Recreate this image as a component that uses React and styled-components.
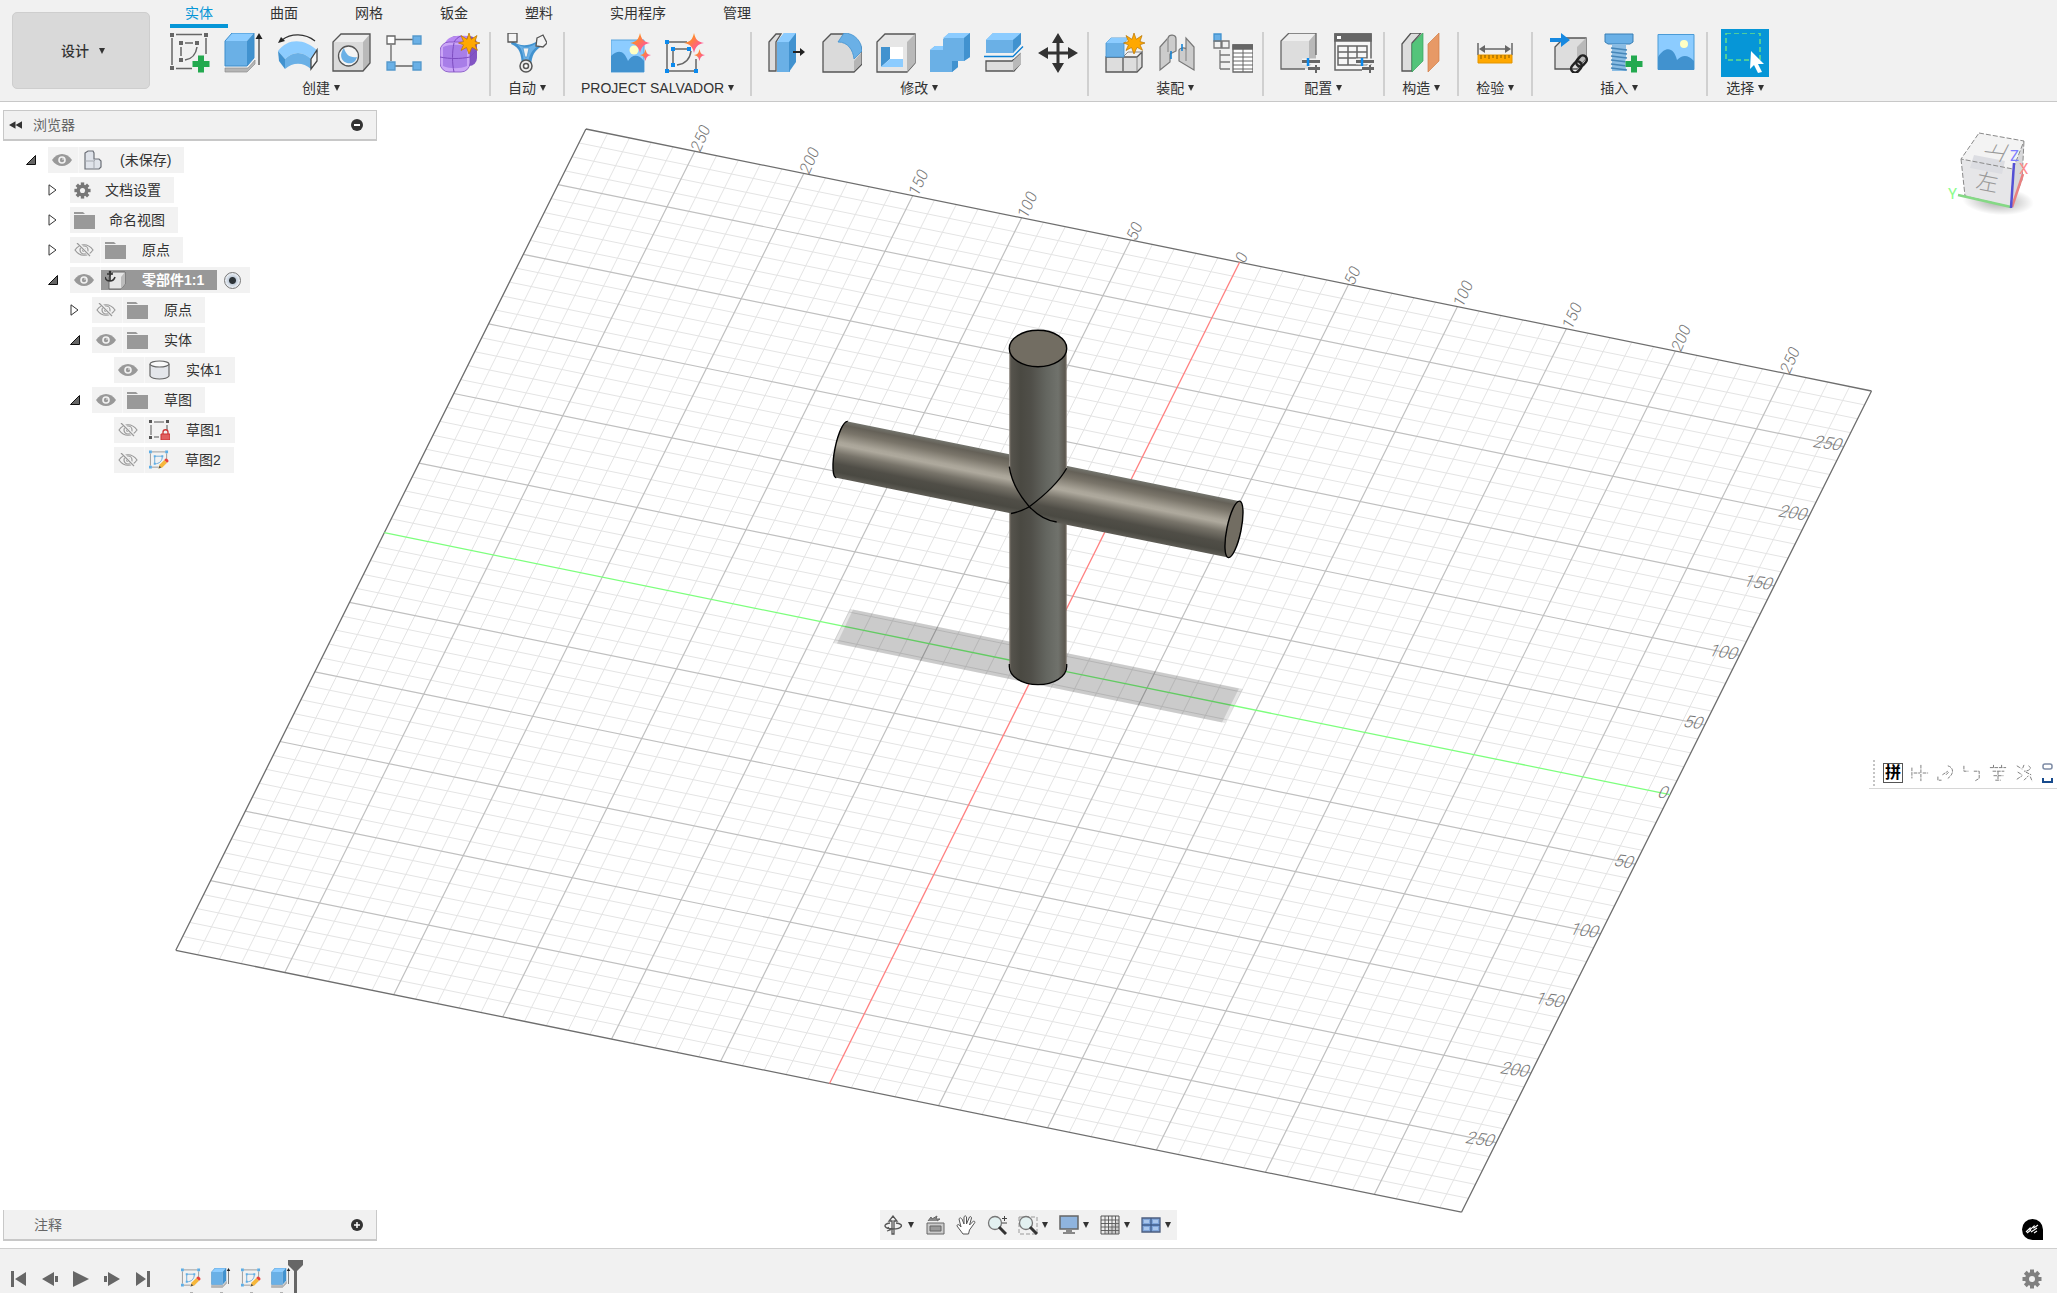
import React from 'react';
import styled, { createGlobalStyle, css } from 'styled-components';

const GlobalStyle = createGlobalStyle`
    * {
        box-sizing: border-box;
    }
    body {
        margin: 0;
        background: #ffffff;
        color: #333333;
        font-family: 'Liberation Sans', 'Noto Sans CJK SC', sans-serif;
        font-size: 14px;
        line-height: 20px;
    }
    button {
        margin: 0;
        padding: 0;
        border: 0;
        background: none;
        color: inherit;
        font: inherit;
        cursor: pointer;
    }
    ul {
        margin: 0;
        padding: 0;
        list-style: none;
    }
    svg {
        display: block;
        flex: none;
    }
`

const Page = styled.div`
    display: flex;
    flex-direction: column;
    min-height: 100vh;
    overflow: hidden;
`
const Header = styled.header`
    display: flex;
    height: 102px;
    padding-left: 12px;
    background: #f1f1f1;
    border-bottom: 1px solid #c8c8c8;
`
const Workspace = styled.button`
    display: flex;
    align-items: center;
    justify-content: center;
    gap: 10px;
    flex: none;
    width: 138px;
    height: 77px;
    margin-top: 12px;
    padding-left: 4px;
    background: #d9d9d9;
    border: 1px solid #cecece;
    border-radius: 5px;
    font-weight: 500;
`
const Caret = styled.span`
    width: 0;
    height: 0;
    border: 3px solid transparent;
    border-top: 6px solid #333333;
    border-bottom: 0;
`
const Ribbon = styled.div`
    display: flex;
    flex-direction: column;
    flex: 1;
    min-width: 0;
    gap: 4px;
    padding-left: 4px;
`
const Tabs = styled.nav`
    display: flex;
    gap: 27px;
    height: 28px;
    padding-left: 16px;
`
const Tab = styled.button`
    padding: 2px 15px 0;
    border-bottom: 4px solid ${({ $active }) => ($active ? '#0696d7' : 'transparent')};
    color: ${({ $active }) => ($active ? '#0696d7' : '#333333')};
`
const Groups = styled.div`
    display: flex;
`
const Group = styled.section`
    display: flex;
    flex-direction: column;
    align-items: center;
    gap: 5px;
    height: 64px;
    padding: 1px 9px 0 16px;
    border-right: 2px solid #d0d0d0;
    ${({ $kind }) => $kind === 'single' && css`
        padding: 1px 16px 0;
    `}
    ${({ $kind }) => $kind === 'wide' && css`
        padding: 1px 16px 0;
    `}
    ${({ $kind }) => $kind === 'last' && css`
        padding: 1px 13px 0;
        border-right: 0;
    `}
`
const Tools = styled.div`
    display: flex;
    align-items: center;
    gap: 14px;
    height: 40px;
`
const Tool = styled.button`
    ${({ $active }) => $active && css`
        padding: 4px;
        background: #0696d7;
    `}
`
const GroupLabel = styled.button`
    display: flex;
    align-items: center;
    gap: 4px;
    height: 20px;
    padding-right: ${({ $kind }) => ($kind === 'multi' ? '8px' : '0')};
    white-space: nowrap;
`

const Viewport = styled.main`
    position: relative;
    display: grid;
    flex: 1;
    grid-template-columns: 1fr auto 1fr;
    grid-template-rows: 1fr auto;
    padding: 8px 3px 7px;
`
const Scene = styled.svg`
    position: absolute;
    inset: 0;
    width: 100%;
    height: 100%;
`
const Panel = styled.aside`
    position: relative;
    width: 374px;
`
const PanelBar = styled.div`
    display: flex;
    align-items: center;
    height: 31px;
    padding: 0 13px 0 ${({ $footer }) => ($footer ? '30px' : '5px')};
    background: #f1f1f1;
    border: 1px solid #c8c8c8;
    border-bottom-width: 2px;
    ${({ $footer }) => $footer && css`
        border-top: 0;
    `}
    color: #666666;
`
const PanelTitle = styled.span`
    flex: 1;
    padding-left: ${({ $indent }) => ($indent ? '11px' : '0')};
`
const Tree = styled.ul`
    display: flex;
    flex-direction: column;
    gap: 4px;
    padding-top: 6px;
`
const TreeRow = styled.li`
    display: flex;
    align-items: center;
    height: 26px;
    padding-left: ${({ $level }) => 22 + $level * 22}px;
`
const Toggle = styled.button`
    width: 23px;
    height: 20px;
    padding-left: 1px;
`
const Blank = styled.span`
    width: 23px;
`
const Chip = styled.div`
    display: flex;
    align-items: center;
    height: 26px;
    background: #f2f2f2;
`
const EyeCell = styled.button`
    width: 31px;
    height: 26px;
    padding-left: 4px;
    border-right: 1px solid #f8f8f8;
`
const Item = styled.div`
    display: flex;
    align-items: center;
    height: 20px;
    padding-left: 4px;
    ${({ $selected }) => $selected && css`
        background: #989898;
        color: #ffffff;
        font-weight: 700;
    `}
`
const ItemText = styled.span`
    padding: 0 13px 0 ${({ $near }) => ($near ? '14px' : '16px')};
    white-space: nowrap;
`
const Radio = styled.input`
    appearance: none;
    width: 17px;
    height: 17px;
    margin: 0 9px 0 7px;
    border: 1px solid #777777;
    border-radius: 50%;
    background: radial-gradient(circle, #2c3338 0 3px, #c3cedb 4px, #e8edf3 7px);
`
const Right = styled.div`
    position: relative;
    display: flex;
    flex-direction: column;
    align-items: flex-end;
    padding: 10px;
`
const Corner = styled.div`
    position: relative;
    display: flex;
    justify-content: flex-end;
    padding: 7px 11px 0 0;
`
const NavBar = styled.div`
    position: relative;
    display: flex;
    align-items: center;
    grid-column: 2;
    gap: 11px;
    height: 30px;
    padding: 0 6px 0 4px;
    background: #f1f1f1;
`
const NavTool = styled.button`
    display: flex;
    align-items: center;
    gap: 4px;
`
const InputBar = styled.div`
    position: absolute;
    top: 57%;
    right: 0;
    display: flex;
    align-items: center;
    gap: 8px;
    height: 34px;
    padding: 2px 2px 0 4px;
    border-bottom: 1px solid #d6d6d6;
`
const Grip = styled.span`
    height: 26px;
    border-left: 2px dotted #c4c4c4;
`
const ImeKey = styled.button`
    width: 20px;
    height: 20px;
    border: 1px solid #555555;
    color: #000000;
    font-size: 16px;
    font-weight: 700;
    line-height: 18px;
`
const Timeline = styled.footer`
    display: flex;
    align-items: flex-end;
    height: 45px;
    padding: 0 15px 0 11px;
    background: #f1f1f1;
    border-top: 1px solid #cfcfcf;
`
const Playback = styled.div`
    display: flex;
    align-items: center;
    flex: none;
    gap: 15px;
    height: 28px;
    margin-right: 30px;
`
const Features = styled.div`
    display: flex;
    flex: 1;
    gap: 10px;
    height: 33px;
`
const Feature = styled.div`
    position: relative;
    display: flex;
    flex-direction: column;
    align-items: center;
    justify-content: space-between;
    padding-top: 8px;

    &::after {
        content: '';
        width: 3px;
        height: 1px;
        background: #b0b0b0;
    }
`
const Marker = styled.svg`
    position: absolute;
    top: 0;
    left: 17px;
`
const Settings = styled.button`
    height: 28px;
    display: flex;
    align-items: center;
`

const G = '#666666'
const B = '#6ab0e6'
const BD = '#4192cf'
const BL = '#8cccff'

const plus = <path d="M31 22v17M22.500 30.500h17" stroke="#f1f1f1" strokeWidth="8" />
const plusGreen = <path d="M31 22.500v17M22.500 31h17" stroke="#23a94f" strokeWidth="6" />
const star = (
    <path d="M29 0l2.200 6.300L37 2.500l-2 6 5 1.500-5 1.800 2.500 5.500-5.500-3L29 21l-2.500-6.500-5.500 3 2.500-5.700-5-1.800 5-1.500-2.500-6 6 3.800z" fill="#ffa800" stroke="#b87400" strokeWidth=".7" />
)
const sparks = (
    <g stroke="none">
        <path d="M29 0c1.500 6.500 3.500 8.500 10 10-6.500 1.500-8.500 3.500-10 10-1.500-6.500-3.500-8.500-10-10 6.500-1.500 8.500-3.500 10-10z" fill="url(#spark)" />
        <path d="M34.500 16c1 4.500 1.800 5.300 5.500 6-3.700 1-4.500 2-5.500 6-1-4-1.800-5-5.500-6 3.700-.7 4.500-1.500 5.500-6z" fill="url(#spark)" />
    </g>
)
const sliders = (
    <g strokeWidth="3">
        <path d="M22 28.500h18M28 35.500h12M36 32v8" stroke="#f1f1f1" strokeWidth="6" />
        <path d="M22 28.500h18M28 35.500h12" stroke={G} />
        <path d="M36 32v8" stroke={G} strokeWidth="2" />
        <path d="M28 25v8" stroke="#0b8aee" strokeWidth="2.500" />
    </g>
)

const icons = {
    sketch: (
        <g fill="none" stroke={G} strokeWidth="1.500">
            <path d="M6 1.500h26M2 5v27M36 5v16M6 35.500h16M15 10h8M11 14v9M27 14c-1 7-5 12-12 13" />
            <path d="M0 0h4v4H0zM34 0h4v4h-4zM0 33h4v4H0zM9 8h4v4H9zM25 8h4v4h-4zM9 25h4v4H9z" fill={G} stroke="none" />
            {plus}{plusGreen}
        </g>
    ),
    extrude: (
        <>
            <path d="M1 35h23l7-8v4l-8 8H1z" fill="#b5b5b5" stroke="#8d8d8d" strokeWidth=".7" />
            <path d="M1 8v25h22V8z" fill={B} />
            <path d="M1 8l7-8h22l-7 8z" fill={BL} />
            <path d="M23 8l7-8v25l-7 8z" fill={BD} />
            <path d="M1 8v25h22l7-8V0H8z" fill="none" stroke="#3d8dcb" />
            <path d="M35 4v28" stroke="#333" strokeWidth="1.200" />
            <path d="M35 0l3.500 6h-7z" fill="#222" />
        </>
    ),
    revolve: (
        <>
            <path d="M0 18c10-13 26-13 40 0l-7 8c-8-8-18-8-26 0z" fill={BL} />
            <path d="M0 18l7 8v10l-6-8z" fill={BD} />
            <path d="M7 26c8-8 18-8 26 0v10c-8-7-18-7-26 0z" fill={B} />
            <path d="M33 26l6-9v11l-6 8z" fill="#f4f4f4" stroke="#444" strokeWidth="1.300" />
            <path d="M4 7C13 0 27 0 37 8" fill="none" stroke="#333" strokeWidth="1.300" />
            <path d="M0 10l3-6 4 4z" fill="#222" />
        </>
    ),
    hole: (
        <>
            <path d="M1 9l8-8h29l-7 8z" fill="#eee" />
            <path d="M31 9l7-8v29l-7 8z" fill="#b9b9b9" />
            <path d="M1 9h30v29H1z" fill="#dadada" />
            <path d="M1 9v29h30l7-8V1H9z" fill="none" stroke="#555" strokeWidth="1.300" />
            <circle cx="16.500" cy="23" r="10" fill="#f4f4f4" stroke="#555" strokeWidth="1.300" />
            <path d="M12 15c-7 9 0 17 8 15 3-1 4-3 5-6-7 1-11-2-13-9z" fill={B} />
        </>
    ),
    pattern: (
        <g stroke={G} strokeWidth="1.300">
            <path d="M9 6.500h18M5 12v16M9 33h18" />
            <path d="M1 3h8v8H1z" fill="#fff" />
            <path d="M27 3h8v8h-8zM1 29h8v8H1zM27 29h8v8h-8z" fill={B} stroke="#5599cc" />
        </g>
    ),
    form: (
        <>
            <rect x="8" y="3" width="29" height="30" rx="8" fill="#8255c4" />
            <path d="M4 12c3-8 9-10 24-9l-4 7z" fill="#b98af2" />
            <rect x="0" y="9" width="30" height="30" rx="9" fill="#cba6f7" stroke="#7d4cc0" strokeWidth=".8" />
            <path d="M3 14c7-3 17-3 24 0v19c-7 3-17 3-24 0z" fill="#a87ee8" />
            <path d="M0 24c10 2 20 2 30 0M14 10c-2 9-2 20 0 29M14 9c2-3 4-5 7-6M30 24l6-6" fill="none" stroke="#7d4cc0" />
            {star}
        </>
    ),
    auto: (
        <>
            <path d="M5 8c8 5 14 6 24 1l6 4c-8 5-10 9-11 20h-9C14 20 13 15 4 11z" fill={BD} />
            <path d="M8 10c8 5 14 5 20 1l3 2c-6 4-9 9-10 17h-4C16 20 15 14 8 10z" fill={B} />
            <path d="M16 15h6l-2 9h-2z" fill="#f1f1f1" stroke={BD} strokeWidth=".7" />
            <circle cx="19" cy="33" r="6" fill="#eee" stroke="#555" strokeWidth="1.500" />
            <circle cx="19" cy="33" r="2.500" fill="#fff" stroke="#555" strokeWidth="1.500" />
            <path d="M1 0h9v9H1zM30 5l6-3 4 8-4 4-7-1z" fill="#f4f4f4" stroke="#555" strokeWidth="1.300" />
        </>
    ),
    aiImage: (
        <>
            <path d="M0 7h33v32H0z" fill={BL} stroke="#5ba4dc" />
            <path d="M0 23c8-7 13-5 17 5 4-7 11-7 16 0v11H0z" fill={BD} />
            <circle cx="23" cy="17" r="4.500" fill="#ffffc4" />
            {sparks}
        </>
    ),
    aiSketch: (
        <g fill="none" stroke={G} strokeWidth="1.500">
            <path d="M4 9h18M2 11v25M4 38h26M31 26v10M8 18v12M10 16h12M26 18c-1 8-6 13-14 14" />
            <path d="M0 7h4v4H0zM0 36h4v4H0zM29 36h4v4h-4zM6 14h4v4H6zM6 30h4v4H6zM22 14h4v4h-4z" fill="#0b8aee" stroke="none" />
            {sparks}
        </g>
    ),
    pressPull: (
        <>
            <path d="M1 9l7-8h5L8 9v29H1z" fill="#ddd" stroke="#555" strokeWidth="1.300" />
            <path d="M9 9l7-9h12l-6 9v30H9z" fill={B} />
            <path d="M9 9l7-9h12l-6 9z" fill={BL} />
            <path d="M21 9l7-9v29l-7 10z" fill={BD} />
            <path d="M25 19h8" stroke="#222" strokeWidth="2" />
            <path d="M32 15l5 4-5 4z" fill="#222" />
        </>
    ),
    fillet: (
        <>
            <path d="M1 9l8-8h13C33 3 40 11 40 20v11l-8 8H1z" fill="#dadada" stroke="#555" strokeWidth="1.300" />
            <path d="M32 28l7-8v11l-7 7z" fill="#b5b5b5" />
            <path d="M16 9l6-9c11 0 18 9 18 18l-8 8c-1-9-6-17-16-17z" fill={B} stroke={BD} strokeWidth=".8" />
        </>
    ),
    shell: (
        <>
            <path d="M1 9l8-8h30v29l-8 9H1z" fill="#e6e6e6" stroke="#555" strokeWidth="1.300" />
            <path d="M31 9l8-8v29l-8 9z" fill="#b9b9b9" />
            <path d="M5 14h22v20H5z" fill="#fff" />
            <path d="M5 14h9v12l-9 8z" fill={BD} />
            <path d="M14 26h13v8H5z" fill={BL} />
        </>
    ),
    combine: (
        <>
            <path d="M0 17l5-4h8V6l6-6h21v24l-6 4h-6v6l-6 5H0z" fill={B} />
            <path d="M13 5l6-5h21l-6 5zM0 17l5-4h8v4z" fill={BL} />
            <path d="M34 5l6-5v24l-6 4zM22 28h6v6l-6 5z" fill={BD} />
        </>
    ),
    split: (
        <>
            <path d="M2 28h26l8-7v10l-6 7H2z" fill="#ddd" stroke="#555" strokeWidth="1.300" />
            <path d="M29 28l8-8v11l-8 7z" fill="#b9b9b9" />
            <path d="M2 7l7-7h28v11l-8 9H2z" fill={B} />
            <path d="M2 7l7-7h28l-8 7z" fill={BL} />
            <path d="M29 7l8-7v11l-8 9z" fill={BD} />
            <path d="M0 24h29l10-10" fill="none" stroke="#f1f1f1" strokeWidth="4" />
            <path d="M0 23.500h29l10-10" fill="none" stroke="#0b7fd4" strokeWidth="1.300" />
        </>
    ),
    move: (
        <>
            <path d="M20 5v30M5 20h30" stroke="#333" strokeWidth="3" />
            <path d="M20 0l6 10H14zM20 40l6-10H14zM0 20l10-6v12zM40 20l-10-6v12z" fill="#333" />
        </>
    ),
    newComponent: (
        <>
            <path d="M1 24h17v15H1zM18 24h14l5-5v15l-5 5H18z" fill="#ddd" stroke="#555" strokeWidth="1.300" />
            <path d="M18 24v15M18 24l5-5h14M32 25v13" stroke="#888" fill="none" />
            <path d="M1 10l5-5h17l-4 5v14H1z" fill={B} stroke={BD} strokeWidth=".8" />
            <path d="M1 10l5-5h17l-4 5z" fill={BL} />
            {star}
        </>
    ),
    joint: (
        <>
            <path d="M1 14l8-9c1-4 8-4 8 1v12l-6 3v8L1 37z" fill="#ccc" stroke="#777" strokeWidth="1.200" />
            <path d="M35 14l-8-9v11c-2-2-6-1-7 1v11l15 9z" fill="#ccc" stroke="#777" strokeWidth="1.200" />
            <path d="M9 5v14M27 16v12" stroke="#999" strokeWidth="1.500" />
            <path d="M12 18v8M23 11v7" stroke="#0b7fd4" strokeWidth="1.500" />
        </>
    ),
    bom: (
        <g fill="none" stroke={G} strokeWidth="1.300">
            <path d="M1 1h7v7H1z" fill={B} stroke={BD} />
            <path d="M1 8h7v7H1zM9 8h7v7H9zM7 17v19M7 22h10M7 29h10M7 36h10" stroke="#777" />
            <path d="M20 12h20v27H20z" fill="#fff" />
            <path d="M20 12h20v4H20z" fill={G} />
            <path d="M20 20h20M20 24h20M20 28h20M20 32h20M20 36h20M30 16v23" strokeWidth="1" />
        </g>
    ),
    configure: (
        <>
            <path d="M1 8l8-8h27l-6 8z" fill="#eee" />
            <path d="M29 8l7-8v26l-7 8z" fill="#b9b9b9" />
            <path d="M1 8h28v28H1z" fill="#ddd" />
            <path d="M36 22V0H9L1 8v28h24" fill="none" stroke="#666" strokeWidth="1.300" />
            {sliders}
        </>
    ),
    configTable: (
        <g fill="none" stroke={G} strokeWidth="1.500">
            <path d="M1 1h36v36H1z" fill="#f7f7f7" />
            <path d="M1 1h36v7H1z" fill={G} />
            <path d="M3 3h4v3H3z" fill="#fff" stroke="none" />
            <path d="M4 13h29v19H4zM4 19h29M4 25h29M14 13v19M23 13v19" />
            {sliders}
        </g>
    ),
    plane: (
        <>
            <path d="M1 11l9-11h10L11 10v28H1z" fill="#ddd" stroke="#555" strokeWidth="1.300" />
            <path d="M11 11L22 0v28L11 39z" fill="#54c47a" stroke="#38a35c" strokeWidth=".7" />
            <path d="M27 11L38 0v28L27 39z" fill="#e79966" stroke="#d17c45" strokeWidth=".7" />
        </>
    ),
    measure: (
        <>
            <path d="M3 10v12M37 10v12" stroke={G} strokeWidth="1.500" />
            <path d="M6 16h28" stroke={G} strokeWidth="1.500" />
            <path d="M4 16l6-4v8zM36 16l-6-4v8z" fill={G} />
            <path d="M3 22h34v8H3z" fill="#ffa800" stroke="#e39500" />
            <path d="M6 22v4M10 22v3M14 22v4M18 22v3M22 22v4M26 22v3M30 22v4M34 22v3" stroke="#875b00" />
        </>
    ),
    insertLink: (
        <>
            <path d="M6 14l9-9h22v20L28 36H6z" fill="#ddd" stroke="#555" strokeWidth="1.300" />
            <path d="M28 14l9-9v20l-9 11z" fill="#b9b9b9" />
            <path d="M1 5h11V0l9 7-9 7V9H1z" fill="#1688e0" />
            <g fill="none" stroke="#222" strokeWidth="2.500" transform="rotate(-50 30 31)">
                <rect x="20" y="27" width="12" height="8" rx="4" />
                <rect x="28" y="27" width="12" height="8" rx="4" />
            </g>
        </>
    ),
    bolt: (
        <>
            <path d="M2 1h28v8l-3 2H5L2 9z" fill={B} stroke="#397fb5" />
            <path d="M9 11h14v27H9z" fill="#8abce3" />
            <path d="M8 15l16 2M8 19l16 2M8 23l16 2M8 27l16 2M8 31l16 2M8 35l16 2" stroke="#4686b8" strokeWidth="1.300" />
            {plus}{plusGreen}
        </>
    ),
    image: (
        <>
            <path d="M1 1.500h36v35H1z" fill={BL} stroke="#4b9bd6" />
            <path d="M1 24c8-12 16-9 19 3 6-6 11-5 17 1v9H1z" fill={BD} />
            <circle cx="27" cy="11" r="4" fill="#ffffc4" />
        </>
    ),
    select: (
        <>
            <path d="M1 0h34v27H1z" fill="none" stroke="#67e08b" strokeWidth="1.500" strokeDasharray="5 3" />
            <path d="M26 18l13 13-6 0 4 8-4 1-4-8-4 4z" fill="#fff" />
        </>
    ),
}

const groups = [
    { label: '创建', kind: 'multi', tools: [['sketch', '创建草图'], ['extrude', '拉伸'], ['revolve', '旋转'], ['hole', '孔'], ['pattern', '阵列'], ['form', '创建造型']] },
    { label: '自动', kind: 'single', tools: [['auto', '自动建模']] },
    { label: 'PROJECT SALVADOR', kind: 'wide', tools: [['aiImage', '图像'], ['aiSketch', '草图']] },
    { label: '修改', kind: 'multi', tools: [['pressPull', '按拉'], ['fillet', '圆角'], ['shell', '抽壳'], ['combine', '合并'], ['split', '分割实体'], ['move', '移动']] },
    { label: '装配', kind: 'multi', tools: [['newComponent', '新建零部件'], ['joint', '联接'], ['bom', '明细表']] },
    { label: '配置', kind: 'multi', tools: [['configure', '配置模型'], ['configTable', '配置表']] },
    { label: '构造', kind: 'single', tools: [['plane', '偏移平面']] },
    { label: '检验', kind: 'single', tools: [['measure', '测量']] },
    { label: '插入', kind: 'multi', tools: [['insertLink', '插入衍生'], ['bolt', '插入紧固件'], ['image', '贴图']] },
    { label: '选择', kind: 'last', tools: [['select', '选择']] },
]

const tabs = ['实体', '曲面', '网格', '钣金', '塑料', '实用程序', '管理']

const Eye = ({ off }) => (
    <svg width="20" height="14" viewBox="0 0 20 14">
        {off ? (
            <g fill="none" stroke="#999" strokeWidth="1.200">
                <path d="M1 7c5-7 13-7 18 0-5 7-13 7-18 0z" />
                <circle cx="10" cy="7" r="4" />
                <circle cx="10" cy="7" r="1.500" />
                <path d="M4 0l13 14" stroke="#f2f2f2" strokeWidth="3" />
                <path d="M3 0l13 13" />
            </g>
        ) : (
            <>
                <path d="M0 7c5-8 15-8 20 0-5 8-15 8-20 0z" fill="#999" />
                <circle cx="10" cy="7" r="3.800" fill="#f2f2f2" />
                <circle cx="10" cy="7" r="2.200" fill="#999" />
                <circle cx="11" cy="6" r=".8" fill="#f2f2f2" />
            </>
        )}
    </svg>
)

const Gear = ({ color, hole, size }) => (
    <svg width={size} height={size} viewBox="-10 -10 20 20">
        {[0, 45, 90, 135].map((a) => (
            <path key={a} d="M-2-9.500h4v19h-4z" fill={color} transform={`rotate(${a})`} />
        ))}
        <circle r="7" fill={color} />
        <circle r="3" fill={hole} />
    </svg>
)

const pencil = (
    <>
        <path d="M10 19l1-4 5-5 3 3-5 5z" fill="#f6b73c" />
        <path d="M16 10l1.500-1.500c2 0 3 1.500 3 3L19 13z" fill="#e8413c" />
        <path d="M10 19l1-3 2 2z" fill="#555" />
    </>
)

const SketchSmall = () => (
    <svg width="20" height="20" viewBox="0 0 21 20">
        <path d="M3 1.500h14M1.500 3v13M18.500 3v6M3 17.500h7" fill="none" stroke="#999" />
        <path d="M6 6h8c0 5-3 8-8 8z" fill="none" stroke="#6aa9d8" />
        <path d="M0 0h3v3H0zM17 0h3v3h-3zM0 16h3v3H0zM5 5h2v2H5zM13 5h2v2h-2zM5 13h2v2H5z" fill="#5eaee6" />
        {pencil}
    </svg>
)

const treeIcons = {
    root: (
        <svg width="21" height="20" viewBox="0 0 21 20">
            <path d="M2 3l3-2h5l1 2v6h5l2 2v6l-2 2H2z" fill="#dfe3ea" stroke="#6b6f76" strokeWidth="1.200" />
            <path d="M2 11h9v8M11 11l2-2" fill="none" stroke="#a5a9b0" />
        </svg>
    ),
    gear: <Gear size="17" color="#777" hole="#f2f2f2" />,
    folder: (
        <svg width="21" height="17" viewBox="0 0 21 17">
            <path d="M0 0h9l2 2H0zM0 3h21v14H0z" fill="#999" />
        </svg>
    ),
    component: (
        <svg width="21" height="20" viewBox="0 0 21 20">
            <path d="M4 7l4-5h12v12l-4 5H4z" fill="#e6e6e6" stroke="#666" />
            <path d="M16 7l4-5v12l-4 5z" fill="#bbb" />
            <path d="M5 3v8M2 4h6M0 7c1 4 3 4 5 4s4-1 5-4" fill="none" stroke="#333" strokeWidth="1.600" />
            <circle cx="5" cy="2" r="1.300" fill="#333" />
        </svg>
    ),
    body: (
        <svg width="21" height="20" viewBox="0 0 21 20">
            <path d="M1 4v12c3 4 16 4 19 0V4" fill="#e4e6ea" stroke="#666" strokeWidth="1.200" />
            <ellipse cx="10.500" cy="4" rx="9.500" ry="3" fill="#fafafa" stroke="#666" strokeWidth="1.200" />
        </svg>
    ),
    sketchLocked: (
        <svg width="21" height="20" viewBox="0 0 21 20">
            <path d="M5 2h10M2 5v10M18 5v5M5 17h5" stroke="#555" />
            <path d="M0 0h3v3H0zM17 0h3v3h-3zM0 16h3v3H0z" fill="#555" />
            <path d="M14 14v-2c0-3 5-3 5 0v2" fill="none" stroke="#c33" strokeWidth="1.300" />
            <path d="M12 14h9v6h-9z" fill="#e06060" stroke="#c33" />
        </svg>
    ),
    sketchEdit: <SketchSmall />,
}

const tree = [
    { level: 0, open: true, eye: 'on', icon: 'root', text: '(未保存)' },
    { level: 1, open: false, icon: 'gear', text: '文档设置' },
    { level: 1, open: false, icon: 'folder', text: '命名视图' },
    { level: 1, open: false, eye: 'off', icon: 'folder', text: '原点' },
    { level: 1, open: true, eye: 'on', icon: 'component', text: '零部件1:1', selected: true },
    { level: 2, open: false, eye: 'off', icon: 'folder', text: '原点' },
    { level: 2, open: true, eye: 'on', icon: 'folder', text: '实体' },
    { level: 3, eye: 'on', icon: 'body', text: '实体1' },
    { level: 2, open: true, eye: 'on', icon: 'folder', text: '草图' },
    { level: 3, eye: 'off', icon: 'sketchLocked', text: '草图1' },
    { level: 3, eye: 'off', icon: 'sketchEdit', text: '草图2' },
]

// ground plane: top left corner and the screen vectors of one 10 mm cell
const O = [585.9, 129]
const U = [21.79, 4.44]
const V = [-6.95, 13.92]
const N = 59
const at = (i, j) => [O[0] + i * U[0] + j * V[0], O[1] + i * U[1] + j * V[1]]
const line = (a, b) => `M${a[0].toFixed(1)} ${a[1].toFixed(1)}L${b[0].toFixed(1)} ${b[1].toFixed(1)}`

const cells = Array.from({ length: N - 1 }, (_, k) => k + 1)
const uLine = (i) => line(at(i, 0), at(i, N))
const vLine = (j) => line(at(0, j), at(N, j))
const minor = cells.filter((k) => k % 5).map(uLine).join('') + cells.filter((k) => k % 5 !== 4).map(vLine).join('')
const major = cells.filter((k) => k % 5 === 0 && k !== 30).map(uLine).join('')
    + cells.filter((k) => k % 5 === 4 && k !== 29).map(vLine).join('')
const marks = [-25, -20, -15, -10, -5, 0, 5, 10, 15, 20, 25]

const Model = () => (
    <Scene viewBox="0 102 2057 1146" aria-label="模型">
        <defs>
            <linearGradient id="upright">
                <stop offset="0" stopColor="#7b746b" />
                <stop offset=".04" stopColor="#55534c" />
                <stop offset=".2" stopColor="#4a4942" />
                <stop offset=".38" stopColor="#504f49" />
                <stop offset=".65" stopColor="#646660" />
                <stop offset=".85" stopColor="#70726c" />
                <stop offset=".97" stopColor="#5c5850" />
                <stop offset="1" stopColor="#82796f" />
            </linearGradient>
            <linearGradient id="crossbar" x2="0" y2="1">
                <stop offset="0" stopColor="#74756e" />
                <stop offset=".08" stopColor="#656158" />
                <stop offset=".2" stopColor="#7a756a" />
                <stop offset=".38" stopColor="#aaa599" />
                <stop offset=".43" stopColor="#aea99d" />
                <stop offset=".58" stopColor="#78746a" />
                <stop offset=".76" stopColor="#504e47" />
                <stop offset=".9" stopColor="#4a4942" />
                <stop offset="1" stopColor="#5f5d56" />
            </linearGradient>
            <clipPath id="arms">
                <path d="M820 400H1009.300V466.700Q1012 487 1029.300 506.700Q1020 512 1011 513.500H1009.300V560H820z" />
                <path d="M1066.700 468.300Q1056 487 1029.300 506.700Q1042 520 1056.700 522L1066.700 560H1260V400H1066.700z" />
            </clipPath>
        </defs>
        <path d={minor} stroke="#e4e4e4" strokeWidth="1" />
        <path d={major} stroke="#c0c0c0" strokeWidth="1.200" />
        <path d={`${line(at(0, 0), at(N, 0))}${line(at(N, 0), at(N, N))}${line(at(N, N), at(0, N))}${line(at(0, N), at(0, 0))}`} stroke="#6e6e6e" strokeWidth="1.300" />
        <path d={uLine(30)} stroke="#ff8080" strokeWidth="1.300" />
        <path d={vLine(29)} stroke="#7dff7d" strokeWidth="1.300" />
        <g fill="#777777" fontFamily="Roboto, 'Liberation Sans', sans-serif" fontWeight="300">
            {marks.map((m) => {
                const [x, y] = at(30 + m, 0)
                return <text key={m} fontSize="16" transform={`translate(${x + 5} ${y + 2}) rotate(-66) skewX(-8)`}>{Math.abs(m) * 10}</text>
            })}
            {marks.map((m) => {
                const [x, y] = at(N, 29 + m)
                return <text key={m} fontSize="17" textAnchor="end" transform={`translate(${x - 4} ${y + 4}) rotate(8) skewX(-18)`}>{Math.abs(m) * 10}</text>
            })}
        </g>
        <path d="M850 609L1243 689L1225 723L833 643z" opacity=".1" />
        <path d="M853 609.500L1239 688.500L1222 722.500L837 643.500z" opacity=".11" />
        <path d="M1009.300 348.500V666.500A28.700 18.200 0 0 0 1066.700 666.500V348.500z" fill="url(#upright)" />
        <path d="M1009.300 664V666.500A28.700 18.200 0 0 0 1066.700 666.500V664" fill="none" stroke="#000" strokeWidth="1.300" />
        <ellipse cx="1038" cy="348.500" rx="28.700" ry="18.200" fill="#726d62" stroke="#000" strokeWidth="1.400" />
        <g clipPath="url(#arms)">
            <g transform="translate(842 449.600) rotate(11.500)">
                <path d="M0-28.800H400V28.800H0A7.100 28.800 0 0 1 0-28.800z" fill="url(#crossbar)" />
                <path d="M0 28.800A7.100 28.800 0 0 1 0-28.800" fill="none" stroke="#000" strokeWidth="1.400" />
                <ellipse cx="400" cy="0" rx="7.100" ry="28.800" fill="#726d62" stroke="#000" strokeWidth="1.400" />
            </g>
        </g>
        <path d="M1009.300 466.700Q1012 487 1029.300 506.700Q1042 520 1056.700 522M1066.700 468.300Q1056 487 1029.300 506.700Q1020 512 1011 513.500" fill="none" stroke="#000" strokeWidth="1.300" />
    </Scene>
)

const ViewCube = () => (
    <svg width="100" height="110" viewBox="1944 120 100 110">
        <defs>
            <radialGradient id="cubeShade">
                <stop offset="0" stopColor="#000" stopOpacity=".35" />
                <stop offset="1" stopColor="#000" stopOpacity="0" />
            </radialGradient>
        </defs>
        <ellipse cx="1998" cy="201" rx="36" ry="14" fill="url(#cubeShade)" transform="rotate(4 1998 201)" />
        <path d="M1979 133L2024 141L2013 169L1961 159z" fill="#f3f3f3" />
        <path d="M1961 159L2013 169L2011 207L1965 196z" fill="#e6e6e8" />
        <path d="M2024 141L2013 169L2011 207L2022 180z" fill="#d8d8da" />
        <path d="M1974 155L2005 161L2002 174L1970 168z" fill="#dcdde2" />
        <path d="M1979 133L2024 141L2013 169L1961 159zM1961 159L1965 196L2011 207L2022 180L2024 141" fill="none" stroke="#8a8a8a" strokeDasharray="5 2" />
        <g fill="#999" fontFamily="'Noto Sans CJK SC', sans-serif" fontSize="22" fontWeight="300">
            <text transform="translate(1999 163) rotate(-63) skewX(20)">上</text>
            <text transform="translate(1975 188) rotate(11)">左</text>
        </g>
        <path d="M2023 174L2012 207" stroke="#e98080" strokeWidth="2.500" />
        <path d="M1958 195L2011 207" stroke="#85d985" strokeWidth="2.500" />
        <path d="M2014 163L2011 208" stroke="#5450d4" strokeWidth="2.500" />
        <g fontFamily="Roboto, sans-serif" fontSize="15">
            <text x="2010" y="161" fill="#7d7dff">Z</text>
            <text x="2019" y="174" fill="#ff8b8b">X</text>
            <text x="1948" y="199" fill="#8cfc8c">Y</text>
        </g>
    </svg>
)

const lens = (
    <>
        <circle cx="8" cy="8" r="6.500" fill="#e3f1f1" stroke="#777" strokeWidth="1.300" />
        <path d="M12 12l7 7" stroke="#333" strokeWidth="3" />
    </>
)

const navTools = [
    ['动态观察', true, <path d="M8 6H5l4-5 4 5h-3v13H8zM6 8c-8 1-6 6 3 6s12-5 3-6M4 12l2 3-3 1" fill="none" stroke="#555" strokeWidth="1.300" />],
    ['观察方向', false, (
        <g stroke="#666" fill="#ccc">
            <path d="M2 8h17v11H2z" /><path d="M5 11h11v5H5z" fill="#999" /><path d="M3 6l3-4 1 2 5-3-1 3h4l-3 2" fill="#888" />
        </g>
    )],
    ['平移', false, <path d="M7 19L1 11c0-2 2-2 4 1L3 4c1-2 2-1 3 0l2 5V2c1-2 2-1 2.500 0v7l3-7c1-1 2 0 2 1l-2 7 4-4c1 0 2 1 1 2l-5 7-1 4z" fill="#fff" stroke="#555" />],
    ['缩放', false, <>{lens}<path d="M15 3.500h5M17.500 1v5M15 8h5" stroke="#444" strokeWidth="1" /></>],
    ['适合窗口', true, <><path d="M1 2h18v17H1z" fill="none" stroke="#999" strokeDasharray="4 2" />{lens}</>],
    ['显示设置', true, (
        <>
            <path d="M1 1h18v13H1z" fill="#8fb4de" stroke="#666" strokeWidth="1.500" /><path d="M7 15h6v2h3v2H4v-2h3z" fill="#888" />
        </>
    )],
    ['栅格和捕捉', true, (
        <g stroke="#555">
            <path d="M1 1h18v18H1z" fill="#eeeeee" /><path d="M5 1v18M8.500 1v18M12 1v18M15.500 1v18M1 5h18M1 8.500h18M1 12h18M1 15.500h18" strokeWidth=".9" /><path d="M19 4v15H4z" fill="#777" stroke="none" opacity=".3" />
        </g>
    )],
    ['视口', true, <><path d="M1 3h18v14H1z" fill="#7fa5da" stroke="#4d5f80" strokeWidth="1.300" /><path d="M10 3v14M1 10h18" stroke="#3f5c8a" strokeWidth="1.300" /><path d="M3 5h5v3H3zM12 5h5v3h-5zM3 12h5v3H3zM12 12h5v3h-5z" fill="#a9c6ec" /></>],
]

const playback = [
    ['转到开头', 'M0 0h3v16H0zM15 1v14L4 8z'],
    ['上一步', 'M12 1v14L0 8zM13 5h3v6h-3z'],
    ['播放', 'M0 0l16 8L0 16z'],
    ['下一步', 'M4 1v14L16 8zM0 5h3v6H0z'],
    ['转到结尾', 'M1 1v14l10-7zM12 0h3v16h-3z'],
]

const ExtrudeSmall = () => (
    <svg width="20" height="20" viewBox="0 0 40 40">{icons.extrude}</svg>
)

const imeParts = [
    'M1 4v12M11 1v18M3 10h7M13 10h6',
    'M1 14v4h4M6 12l6-4M12 2c7 2 7 9 0 14M10 12l3-3',
    'M1 2v6h5M12 8h6v8l-5 3',
    'M1 4h18M5 1v3M14 1v3M4 8h13M10 8v9M5 13h11M7 18h6',
    'M2 2l5 3M10 1l-2 5M15 2c5 3 0 6-5 6M3 9l5 3M12 9l6 3M2 17l6-4M10 18l5-5M17 14l2 5',
]

const App = () => {
    return (
        <Page>
            <GlobalStyle />
            <Header>
                <Workspace>设计<Caret /></Workspace>
                <Ribbon>
                    <Tabs>
                        {tabs.map((tab, i) => <Tab key={tab} $active={i === 0}>{tab}</Tab>)}
                    </Tabs>
                    <Groups>
                        {groups.map((group) => (
                            <Group key={group.label} $kind={group.kind}>
                                <Tools>
                                    {group.tools.map(([icon, name]) => (
                                        <Tool key={icon} aria-label={name} $active={icon === 'select'}>
                                            <svg width="40" height="40" viewBox="0 0 40 40">
                                                {group.kind === 'wide' && (
                                                    <linearGradient id="spark" x2="1" y2="1">
                                                        <stop offset=".3" stopColor="#ff8a2b" />
                                                        <stop offset=".8" stopColor="#ff4fa8" />
                                                    </linearGradient>
                                                )}
                                                {icons[icon]}
                                            </svg>
                                        </Tool>
                                    ))}
                                </Tools>
                                <GroupLabel $kind={group.kind}>{group.label}<Caret /></GroupLabel>
                            </Group>
                        ))}
                    </Groups>
                </Ribbon>
            </Header>

            <Viewport>
                <Model />
                <Panel>
                    <PanelBar>
                        <button aria-label="折叠">
                            <svg width="13" height="8" viewBox="0 0 14 8"><path d="M7 0v8L0 4zM14 0v8L7 4z" fill="#333" /></svg>
                        </button>
                        <PanelTitle $indent>浏览器</PanelTitle>
                        <button aria-label="隐藏浏览器">
                            <svg width="12" height="12" viewBox="0 0 12 12"><circle cx="6" cy="6" r="6" fill="#333" /><path d="M3 6h6" stroke="#fff" strokeWidth="2" /></svg>
                        </button>
                    </PanelBar>
                    <Tree>
                        {tree.map((row, i) => (
                            <TreeRow key={i} $level={row.level}>
                                {row.open === undefined ? <Blank /> : (
                                    <Toggle aria-label={row.open ? '收起' : '展开'}>
                                        <svg width="10" height="12" viewBox="0 0 10 12">
                                            {row.open
                                                ? <path d="M9.500 1.500v9h-9z" fill="#666" stroke="#111" />
                                                : <path d="M1 .8L8 6 1 11.200z" fill="#fff" stroke="#333" />}
                                        </svg>
                                    </Toggle>
                                )}
                                <Chip>
                                    {row.eye && <EyeCell aria-label="可见性"><Eye off={row.eye === 'off'} /></EyeCell>}
                                    <Item $selected={row.selected}>
                                        {treeIcons[row.icon]}
                                        <ItemText $near={!row.eye}>{row.text}</ItemText>
                                    </Item>
                                    {row.selected && <Radio type="radio" name="active" defaultChecked aria-label="激活零部件" />}
                                </Chip>
                            </TreeRow>
                        ))}
                    </Tree>
                </Panel>
                <span />
                <Right>
                    <ViewCube />
                </Right>
                <Panel>
                    <PanelBar $footer>
                        <PanelTitle>注释</PanelTitle>
                        <button aria-label="添加注释">
                            <svg width="12" height="12" viewBox="0 0 12 12"><circle cx="6" cy="6" r="6" fill="#333" /><path d="M3 6h6M6 3v6" stroke="#fff" strokeWidth="1.500" /></svg>
                        </button>
                    </PanelBar>
                </Panel>
                <NavBar>
                    {navTools.map(([name, menu, icon]) => (
                        <NavTool key={name} aria-label={name}>
                            <svg width="20" height="20" viewBox="0 0 20 20">{icon}</svg>
                            {menu && <Caret />}
                        </NavTool>
                    ))}
                </NavBar>
                <Corner>
                    <button aria-label="助手">
                        <svg width="21" height="21" viewBox="0 0 21 21">
                            <path d="M10.500 0A10.500 10.500 0 0 1 21 10.500V21H10.500A10.500 10.500 0 0 1 10.500 0z" />
                            <path d="M4 13l4-4v2l4-4v2l4-3M5 14l4-3M9 13l6-4M12 14l3-2" fill="none" stroke="#fff" strokeWidth="1.100" />
                        </svg>
                    </button>
                </Corner>
                <InputBar>
                    <Grip />
                    <ImeKey>拼</ImeKey>
                    {imeParts.map((d) => (
                        <svg key={d} width="18" height="18" viewBox="0 0 20 20">
                            <path d={d} fill="none" stroke="#808080" strokeWidth="1.100" strokeDasharray="4 1" />
                        </svg>
                    ))}
                    <svg width="14" height="20" viewBox="0 0 14 20">
                        <rect x="2" y="1" width="9" height="5" rx="2" fill="none" stroke="#7d8ba5" strokeWidth="1.500" />
                        <path d="M2 15v4h9v-4" fill="none" stroke="#174a8c" strokeWidth="2" />
                    </svg>
                </InputBar>
            </Viewport>

            <Timeline>
                <Playback>
                    {playback.map(([name, d]) => (
                        <button key={name} aria-label={name}>
                            <svg width="16" height="16" viewBox="0 0 16 16"><path d={d} fill="#666" /></svg>
                        </button>
                    ))}
                </Playback>
                <Features>
                    <Feature><SketchSmall /></Feature>
                    <Feature><ExtrudeSmall /></Feature>
                    <Feature><SketchSmall /></Feature>
                    <Feature>
                        <ExtrudeSmall />
                        <Marker width="15" height="33" viewBox="0 0 15 33"><path d="M0 0h15v5l-6 6v22H6V11L0 5z" fill="#666" /></Marker>
                    </Feature>
                </Features>
                <Settings aria-label="设置"><Gear size="20" color="#808080" hole="#f1f1f1" /></Settings>
            </Timeline>
        </Page>
    )
}

export default App;
